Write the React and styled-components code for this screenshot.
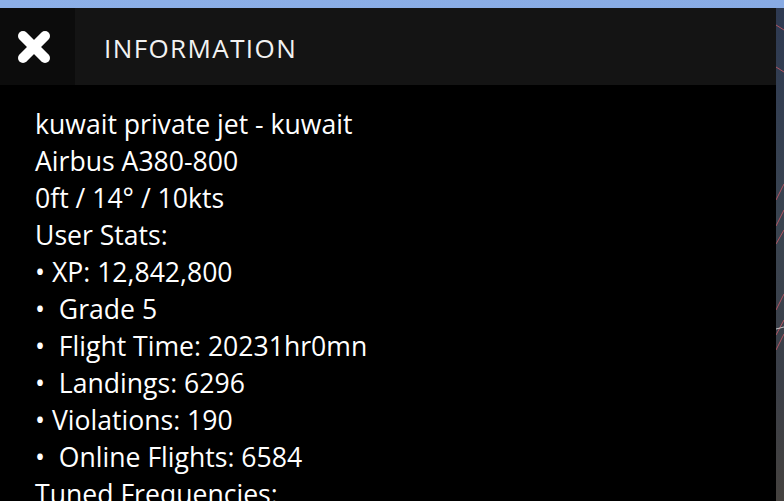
import React from 'react';
import styled, { createGlobalStyle } from 'styled-components';

const GlobalStyle = createGlobalStyle`
  html, body {
    margin: 0;
    padding: 0;
    width: 784px;
    height: 501px;
    overflow: hidden;
    background: #000;
  }
  #root {
    height: 100%;
  }
`;

const Page = styled.div`
  width: 784px;
  height: 501px;
  display: flex;
  flex-direction: column;
  overflow: hidden;
  font-family: "Open Sans", "Noto Sans", sans-serif;
`;

const TopStrip = styled.div`
  height: 8px;
  flex: none;
  background: linear-gradient(90deg, #8db0e8, #88abe4);
`;

const Body = styled.div`
  flex: 1;
  display: flex;
  min-height: 0;
`;

const Panel = styled.div`
  width: 776px;
  flex: none;
  display: flex;
  flex-direction: column;
  background: #000;
`;

const Header = styled.div`
  height: 77px;
  flex: none;
  display: flex;
  align-items: center;
  background: #141414;
`;

const CloseButton = styled.button`
  width: 75px;
  height: 100%;
  border: 0;
  padding: 0;
  margin: 0;
  background: #0c0c0c;
  display: flex;
  align-items: center;
  justify-content: center;
  cursor: pointer;
  svg {
    margin-left: -8px;
  }
`;

const Title = styled.h1`
  margin: 2px 0 0 29px;
  font-size: 26px;
  font-weight: 400;
  letter-spacing: 1.4px;
  color: #f2f2f2;
`;

const Content = styled.div`
  flex: 1;
  overflow: hidden;
  padding: 21px 0 0 35px;
`;

const Line = styled.div`
  color: #fff;
  font-size: 26.6px;
  line-height: 37px;
  white-space: pre;
`;

const MapStrip = styled.svg`
  width: 8px;
  flex: none;
  height: 100%;
  display: block;
`;

const lines = [
  'kuwait private jet - kuwait',
  'Airbus A380-800',
  '0ft / 14° / 10kts',
  'User Stats:',
  '• XP: 12,842,800',
  '•  Grade 5',
  '•  Flight Time: 20231hr0mn',
  '•  Landings: 6296',
  '• Violations: 190',
  '•  Online Flights: 6584',
  'Tuned Frequencies:',
];

const CloseIcon = () => (
  <svg width="36" height="36" viewBox="0 0 36 36">
    <g stroke="#fff" strokeWidth="10" strokeLinecap="round">
      <line x1="7" y1="7" x2="29" y2="29" />
      <line x1="29" y1="7" x2="7" y2="29" />
    </g>
  </svg>
);

const Map = () => (
  <MapStrip viewBox="0 0 8 493" preserveAspectRatio="none">
    <defs>
      <linearGradient id="mapfill" x1="0" y1="0" x2="0" y2="1">
        <stop offset="0" stopColor="#2e3a52" />
        <stop offset="0.45" stopColor="#3a4450" />
        <stop offset="0.75" stopColor="#3b3f48" />
        <stop offset="1" stopColor="#45423f" />
      </linearGradient>
    </defs>
    <rect x="0" y="0" width="8" height="493" fill="url(#mapfill)" />
    <g stroke="#b05560" strokeWidth="1" fill="none">
      <line x1="0" y1="17" x2="8" y2="22" />
      <line x1="0" y1="59" x2="8" y2="64" />
      <line x1="0" y1="192" x2="8" y2="176" />
      <line x1="0" y1="218" x2="8" y2="202" />
      <line x1="0" y1="236" x2="8" y2="222" />
      <line x1="0" y1="302" x2="8" y2="286" />
      <line x1="0" y1="327" x2="8" y2="312" />
      <line x1="0" y1="342" x2="8" y2="326" />
    </g>
    <line x1="0" y1="321" x2="8" y2="319" stroke="#c8c8c8" strokeWidth="1" />
  </MapStrip>
);

export default function App() {
  return (
    <>
      <GlobalStyle />
      <Page>
        <TopStrip />
        <Body>
          <Panel>
            <Header>
              <CloseButton aria-label="Close">
                <CloseIcon />
              </CloseButton>
              <Title>INFORMATION</Title>
            </Header>
            <Content>
              {lines.map((text) => (
                <Line key={text}>{text}</Line>
              ))}
            </Content>
          </Panel>
          <Map />
        </Body>
      </Page>
    </>
  );
}
